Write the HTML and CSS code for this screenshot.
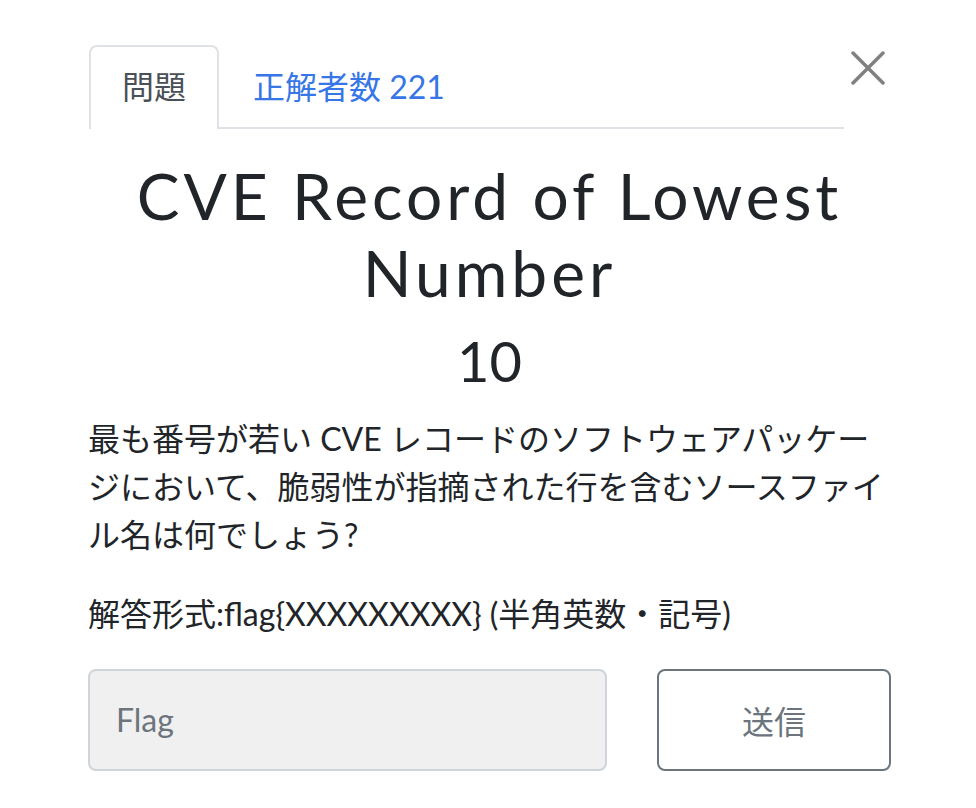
FILE: index.html
```html
<!DOCTYPE html>
<html lang="ja">
<head>
<meta charset="utf-8">
<title>Challenge</title>
<link rel="stylesheet" href="styles.css">
</head>
<body>
<div class="modal">
  <div class="header">
    <ul class="tabs">
      <li class="tab active">問題</li>
      <li class="tab link">正解者数 221</li>
    </ul>
    <button class="close" aria-label="Close">
      <svg width="34" height="34" viewBox="0 0 34 34"><path d="M2 2 L32 32 M32 2 L2 32" stroke="#808080" stroke-width="3.5" stroke-linecap="round" fill="none"/></svg>
    </button>
  </div>
  <h2 class="title">CVE Record of Lowest Number</h2>
  <h3 class="value">10</h3>
  <p class="desc">最も番号が若い CVE レコードのソフトウェアパッケージにおいて、脆弱性が指摘された行を含むソースファイル名は何でしょう?</p>
  <p class="format">解答形式:flag{XXXXXXXXX} (半角英数・記号)</p>
  <div class="form">
    <input class="flag" type="text" placeholder="Flag">
    <button class="submit">送信</button>
  </div>
</div>
</body>
</html>
```
FILE: styles.css
```css
html, body {
  margin: 0;
  padding: 0;
  background: #fff;
}
body {
  font-family: "Lato", "Noto Sans CJK JP", sans-serif;
  color: #212529;
}
.modal {
  width: 803px;
  padding: 45px 0 0 88px;
}
.header {
  display: flex;
  align-items: flex-start;
}
.tabs {
  list-style: none;
  margin: 0 0 0 1px;
  padding: 0;
  display: flex;
  width: 755px;
  border-bottom: 2px solid #dee2e6;
}
.tab {
  font-size: 32px;
  line-height: 48px;
  padding: 16px 31px 18px;
  border: 2px solid transparent;
  border-bottom: 0;
  border-radius: 8px 8px 0 0;
  margin-bottom: -2px;
}
.tab.active {
  color: #495057;
  border-color: #dee2e6;
  background: #fff;
}
.tab.link {
  color: #3776e6;
  padding-left: 32px;
}
.close {
  margin: 6px 0 0 7px;
  padding: 0;
  border: 0;
  background: none;
  width: 34px;
  height: 34px;
  display: flex;
}
.title {
  margin: 29px 0 0;
  font-size: 64px;
  line-height: 1.2;
  font-weight: 400;
  text-align: center;
  letter-spacing: 4px;
}
.value {
  margin: 15px 0 0;
  font-size: 56px;
  line-height: 1.2;
  font-weight: 400;
  text-align: center;
}
.desc {
  margin: 21px 0 0;
  font-size: 32px;
  line-height: 48px;
}
.format {
  margin: 31px 0 0;
  font-size: 32px;
  line-height: 48px;
}
.form {
  margin-top: 31px;
  display: flex;
  gap: 50px;
}
.flag {
  width: 519px;
  height: 102px;
  box-sizing: border-box;
  border: 2px solid #ced4da;
  border-radius: 8px;
  background: #f0f0f0;
  padding: 0 26px;
  font-family: "Lato", sans-serif;
  font-size: 32px;
  color: #495057;
}
.flag::placeholder {
  color: #6c757d;
}
.submit {
  width: 234px;
  height: 102px;
  box-sizing: border-box;
  border: 2px solid #6c757d;
  border-radius: 8px;
  background: #fff;
  color: #6c757d;
  font-family: "Lato", "Noto Sans CJK JP", sans-serif;
  font-size: 32px;
}
```
